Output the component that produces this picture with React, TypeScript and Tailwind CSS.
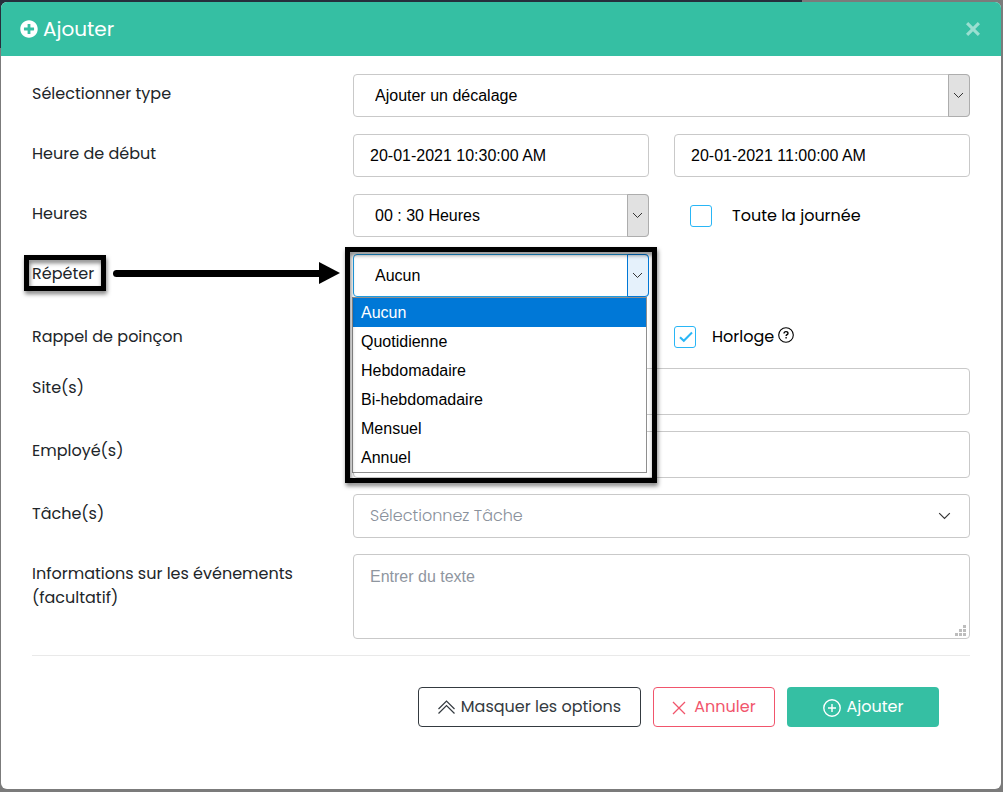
import { useState } from "react";
import type { ReactNode } from "react";
import { FaPlusCircle } from "react-icons/fa";

const repeatOptions = [
  "Aucun",
  "Quotidienne",
  "Hebdomadaire",
  "Bi-hebdomadaire",
  "Mensuel",
  "Annuel",
];

const uiFont = "font-[Poppins,Inter,sans-serif]";
const fieldFont = "font-['Liberation_Sans',Arial,sans-serif]";
const box = `block w-full rounded border border-[#c9c9c9] bg-white px-4 text-base text-black outline-none ${fieldFont}`;

function Row({
  label,
  htmlFor,
  className = "min-h-11",
  children,
}: {
  label: ReactNode;
  htmlFor: string;
  className?: string;
  children: ReactNode;
}) {
  return (
    <div className={`grid grid-cols-3 items-start gap-x-[25px] ${className}`}>
      <div className="relative pt-2 leading-6">
        <label htmlFor={htmlFor}>{label}</label>
      </div>
      {children}
    </div>
  );
}

function Chevron({ className = "w-[11px]" }: { className?: string }) {
  return (
    <svg className={className} viewBox="0 0 11 7" fill="none" stroke="currentColor">
      <path d="M1 1l4.5 4.5L10 1" />
    </svg>
  );
}

function Select({
  id,
  options,
  value,
  onChange,
  active = false,
}: {
  id: string;
  options: string[];
  value?: string;
  onChange?: (value: string) => void;
  active?: boolean;
}) {
  return (
    <div className="relative">
      <select
        id={id}
        value={value}
        onChange={(e) => onChange?.(e.target.value)}
        className={`block h-[43px] w-full appearance-none rounded border bg-white px-[21px] text-base text-black outline-none ${fieldFont} ${
          active ? "border-[#1e9be0]" : "border-[#c9c9c9]"
        }`}
      >
        {options.map((o) => (
          <option key={o}>{o}</option>
        ))}
      </select>
      <span
        className={`pointer-events-none absolute inset-y-0 right-0 flex w-[22px] items-center justify-center rounded-r border pr-px text-[#333] ${
          active ? "border-[#0078d7] bg-[#e5f1fb]" : "border-[#adadad] bg-[#e1e1e1]"
        }`}
      >
        <Chevron />
      </span>
    </div>
  );
}

function Checkbox({
  id,
  defaultChecked = false,
  className = "gap-4",
  children,
}: {
  id: string;
  defaultChecked?: boolean;
  className?: string;
  children: ReactNode;
}) {
  return (
    <div className={`flex items-center ${className}`}>
      <span className="relative flex shrink-0">
        <input
          id={id}
          type="checkbox"
          defaultChecked={defaultChecked}
          className="peer size-[22px] appearance-none rounded-[3px] border border-[#29b6f6] bg-white"
        />
        <svg
          className="pointer-events-none absolute inset-0 hidden peer-checked:block"
          width="22"
          height="22"
          viewBox="0 0 22 22"
          fill="none"
          stroke="#29b6f6"
          strokeWidth="2"
        >
          <path d="M6 11.2l3.8 3.6L18 6.5" />
        </svg>
      </span>
      <label htmlFor={id} className="whitespace-nowrap text-black">
        {children}
      </label>
    </div>
  );
}

function HelpIcon() {
  return (
    <svg className="mb-1" width="16" height="16" viewBox="0 0 16 16" fill="none" stroke="currentColor">
      <circle cx="8" cy="8" r="7.3" strokeWidth="1.1" />
      <path
        d="M6 6.6c0-1.2.8-1.9 2-1.9s2 .7 2 1.7c0 1.2-1.9 1.3-1.9 2.5M8.1 9.9v1.5"
        strokeWidth="1.3"
      />
    </svg>
  );
}

export default function App() {
  const [repeat, setRepeat] = useState("Aucun");

  return (
    <div className={`relative bg-[#7b7b7b] pt-[2px] pr-[2px] pb-[3px] pl-px text-base text-[#212529] ${uiFont}`}>
      <div className="absolute top-0 left-0 h-12 w-4/5 bg-[#262e3c]" />

      <div role="dialog" aria-label="Ajouter" className="relative rounded-md bg-white">
        <header className="flex h-[54px] items-center justify-between rounded-t-md bg-[#35bfa3] pr-[21px] pl-[19px] text-white">
          <h1 className="flex items-center gap-[5px] text-xl">
            <FaPlusCircle className="size-[18px]" />
            Ajouter
          </h1>
          <button type="button" aria-label="Fermer" className="text-white/50">
            <svg width="14" height="14" viewBox="0 0 14 14" fill="currentColor">
              <path d="M2.2 0L7 4.8 11.8 0 14 2.2 9.2 7 14 11.8 11.8 14 7 9.2 2.2 14 0 11.8 4.8 7 0 2.2z" />
            </svg>
          </button>
        </header>

        <form className="px-[31px] pt-[18px] pb-[62px]" onSubmit={(e) => e.preventDefault()}>
          <div className="flex flex-col gap-4">
            <Row label="Sélectionner type" htmlFor="type">
              <div className="col-span-2">
                <Select id="type" options={["Ajouter un décalage"]} />
              </div>
            </Row>

            <Row label="Heure de début" htmlFor="start">
              <input id="start" defaultValue="20-01-2021 10:30:00 AM" className={`${box} h-[43px]`} />
              <input aria-label="Heure de fin" defaultValue="20-01-2021 11:00:00 AM" className={`${box} h-[43px]`} />
            </Row>

            <Row label="Heures" htmlFor="hours">
              <Select id="hours" options={["00 : 30 Heures"]} />
              <div className="flex h-[43px] items-center pl-4">
                <Checkbox id="allDay" className="gap-5">
                  Toute la journée
                </Checkbox>
              </div>
            </Row>

            <Row
              htmlFor="repeat"
              label={
                <>
                  Répéter
                  {/* callout frame and arrow pointing at the list */}
                  <span className="absolute top-px -left-2 h-9 w-[82px] border-[5px] border-black drop-shadow-[1px_3px_2px_rgba(0,0,0,0.5)]" />
                  <span className="absolute top-2 -right-3 left-[81px] flex h-[22px] items-center">
                    <span className="h-[7px] flex-1 rounded-l-full bg-black" />
                    <svg width="21" height="22" viewBox="0 0 21 22">
                      <path d="M0 0l21 11L0 22z" />
                    </svg>
                  </span>
                </>
              }
            >
              <div className="relative z-10">
                <Select id="repeat" options={repeatOptions} value={repeat} onChange={setRepeat} active />
                <ul
                  role="listbox"
                  aria-label="Répéter"
                  className={`absolute top-[43px] right-[2px] -left-px border border-[#8f8f8f] bg-white text-black ${fieldFont}`}
                >
                  {repeatOptions.map((o) => (
                    <li
                      key={o}
                      role="option"
                      aria-selected={o === repeat}
                      onClick={() => setRepeat(o)}
                      className={`h-[29px] px-2 leading-[29px] ${o === repeat ? "bg-[#0078d7] text-white" : ""}`}
                    >
                      {o}
                    </li>
                  ))}
                </ul>
                <div className="pointer-events-none absolute -top-[7px] -right-2 -left-2 h-[236px] border-[5px] border-black drop-shadow-[1px_3px_2px_rgba(0,0,0,0.5)]" />
              </div>
            </Row>

            <Row label="Rappel de poinçon" htmlFor="clock" className="h-[38px] pt-[3px]">
              <div className="col-start-3 flex pt-2">
                <Checkbox id="clock" defaultChecked>
                  <span className="flex items-center gap-1">
                    Horloge <HelpIcon />
                  </span>
                </Checkbox>
              </div>
            </Row>

            <Row label="Site(s)" htmlFor="site">
              <input id="site" className={`${box} col-span-2 h-[47px]`} />
            </Row>

            <Row label="Employé(s)" htmlFor="employee">
              <input id="employee" className={`${box} col-span-2 h-[47px]`} />
            </Row>

            <Row label="Tâche(s)" htmlFor="task">
              <div className="relative col-span-2">
                <select
                  id="task"
                  className={`block h-11 w-full appearance-none rounded border border-[#c9c9c9] bg-white px-4 font-light text-[#8a919b] outline-none ${uiFont}`}
                >
                  <option>Sélectionnez Tâche</option>
                </select>
                <span className="pointer-events-none absolute inset-y-0 right-[19px] flex items-center text-[#333]">
                  <Chevron className="w-[13px]" />
                </span>
              </div>
            </Row>

            <Row
              htmlFor="info"
              label={
                <>
                  Informations sur les événements
                  <br />
                  (facultatif)
                </>
              }
            >
              <div className="relative col-span-2">
                <textarea
                  id="info"
                  placeholder="Entrer du texte"
                  className={`${box} h-[85px] resize-none py-2.5 leading-6 placeholder:text-[#8f969f]`}
                />
                <svg
                  className="pointer-events-none absolute right-1 bottom-[3px]"
                  width="11"
                  height="11"
                  viewBox="0 0 11 11"
                  fill="#bdbdbd"
                >
                  <path d="M8 0h3v3H8zM4 4h3v3H4zM8 4h3v3H8zM0 8h3v3H0zM4 8h3v3H4zM8 8h3v3H8z" />
                </svg>
              </div>
            </Row>

            <hr className="border-[#e9e9e9]" />
          </div>

          <div className="flex justify-end gap-3 px-[31px] pt-[31px]">
            <button
              type="button"
              className="flex h-10 w-[223px] items-center justify-center gap-1.5 rounded border border-[#343a40] text-[#343a40]"
            >
              <svg width="17" height="14" viewBox="0 0 17 14" fill="none" stroke="currentColor" strokeWidth="1.2">
                <path d="M.5 9l8-8 8 8M.5 13.5l8-8 8 8" />
              </svg>
              Masquer les options
            </button>
            <button
              type="button"
              className="flex h-10 w-[122px] items-center justify-center gap-2 rounded border border-[#f1556c] text-[#f1556c]"
            >
              <svg className="mt-0.5" width="14" height="14" viewBox="0 0 14 14" stroke="currentColor" strokeWidth="1.3">
                <path d="M1 1l12 12M13 1L1 13" />
              </svg>
              Annuler
            </button>
            <button
              type="submit"
              className="flex h-10 w-[152px] items-center justify-center gap-1.5 rounded bg-[#35bfa3] text-white"
            >
              <svg className="mt-0.5" width="18" height="18" viewBox="0 0 18 18" fill="none" stroke="currentColor" strokeWidth="1.4">
                <circle cx="9" cy="9" r="8.2" />
                <path d="M9 5v8M5 9h8" />
              </svg>
              Ajouter
            </button>
          </div>
        </form>
      </div>
    </div>
  );
}
